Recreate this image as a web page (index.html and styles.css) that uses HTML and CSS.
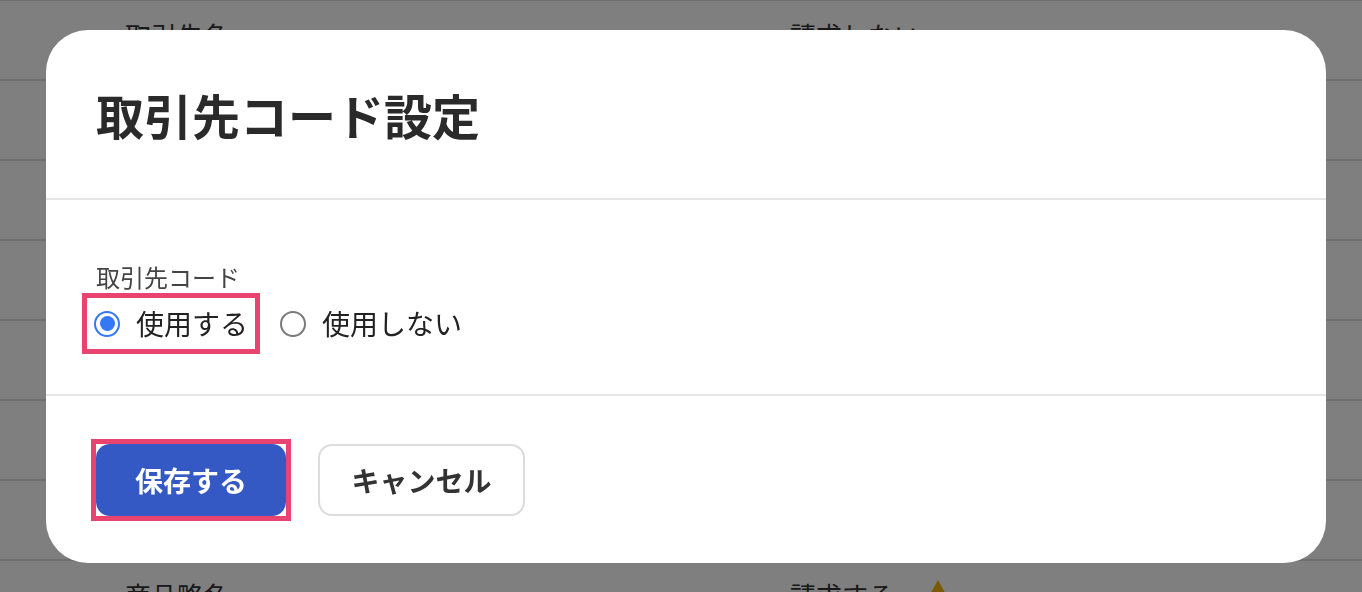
FILE: index.html
```html
<!DOCTYPE html>
<html lang="ja">
<head>
<meta charset="utf-8">
<title>取引先コード設定</title>
<link rel="stylesheet" href="styles.css">
</head>
<body>
<div class="page">
  <div class="list">
    <div class="row"><span class="cell-left">取引先名</span><span class="cell-right">請求しない</span></div>
    <div class="row"><span class="cell-left">取引先コード</span><span class="cell-right">使用する</span></div>
    <div class="row"><span class="cell-left">住所</span><span class="cell-right">表示する</span></div>
    <div class="row"><span class="cell-left">電話番号</span><span class="cell-right">表示する</span></div>
    <div class="row"><span class="cell-left">担当者</span><span class="cell-right">表示する</span></div>
    <div class="row"><span class="cell-left">支払条件</span><span class="cell-right">月末締め</span></div>
    <div class="row"><span class="cell-left">備考</span><span class="cell-right">表示しない</span></div>
    <div class="row"><span class="cell-left">商品略名</span><span class="cell-right">請求する<svg class="warn" width="22" height="20" viewBox="0 0 22 20"><path d="M11 0 L22 20 L0 20 Z" fill="#f4b400"/></svg></span></div>
  </div>
</div>

<div class="overlay">
  <div class="dialog">
    <div class="dialog-header">
      <h2 class="dialog-title">取引先コード設定</h2>
    </div>
    <div class="dialog-body">
      <div class="field-label">取引先コード</div>
      <div class="radio-group">
        <label class="radio-option highlighted">
          <span class="radio checked"></span>
          <span class="radio-text">使用する</span>
        </label>
        <label class="radio-option">
          <span class="radio"></span>
          <span class="radio-text">使用しない</span>
        </label>
      </div>
    </div>
    <div class="dialog-footer">
      <div class="btn-wrap highlighted">
        <button class="btn btn-primary">保存する</button>
      </div>
      <button class="btn btn-secondary">キャンセル</button>
    </div>
  </div>
</div>
</body>
</html>
```

FILE: styles.css
```css
* { box-sizing: border-box; }

html, body {
  margin: 0;
  padding: 0;
  width: 1362px;
  height: 592px;
  overflow: hidden;
  font-family: "Noto Sans CJK JP", "Noto Sans", sans-serif;
  background: #ffffff;
}

.page {
  width: 1362px;
  height: 592px;
  overflow: hidden;
}

.list {
  border-top: 2px solid #dcdcdc;
  margin-top: -1px;
}

.row {
  height: 80px;
  border-bottom: 2px solid #dcdcdc;
  display: flex;
  align-items: flex-start;
  padding-top: 16px;
  font-size: 26px;
  line-height: 36px;
  color: #333333;
  white-space: nowrap;
}

.cell-left {
  width: 790px;
  padding-left: 125px;
}

.cell-right {
  display: flex;
  align-items: flex-start;
}

.warn {
  margin-left: 33px;
  margin-top: 3px;
}

.overlay {
  position: fixed;
  inset: 0;
  background: rgba(0, 0, 0, 0.5);
  padding-top: 30px;
  padding-left: 46px;
}

.dialog {
  width: 1280px;
  height: 533px;
  background: #ffffff;
  border-radius: 42px;
  overflow: hidden;
}

.dialog-header {
  padding: 49px 50px;
  border-bottom: 2px solid #e6e6e6;
}

.dialog-title {
  margin: 0;
  font-size: 48px;
  line-height: 70px;
  font-weight: 700;
  color: #2a2a2a;
}

.dialog-body {
  padding: 60px 50px 45px;
  border-bottom: 2px solid #e6e6e6;
}

.field-label {
  font-size: 24px;
  line-height: 34px;
  color: #444444;
}

.radio-group {
  display: flex;
  gap: 18px;
  margin-top: 4px;
  margin-left: -9px;
}

.radio-option {
  display: flex;
  align-items: center;
  gap: 16px;
  padding: 6px 7px 6px 7px;
  font-size: 28px;
  line-height: 39px;
  color: #222222;
  white-space: nowrap;
}

.highlighted {
  outline: 5px solid #e8446f;
}

.radio {
  width: 26px;
  height: 26px;
  border-radius: 50%;
  border: 2px solid #7a7a7a;
  display: flex;
  align-items: center;
  justify-content: center;
  flex: none;
}

.radio.checked {
  border-color: #3478f6;
}

.radio.checked::after {
  content: "";
  width: 15px;
  height: 15px;
  border-radius: 50%;
  background: #3478f6;
}

.dialog-footer {
  padding: 48px 50px 0;
  display: flex;
  align-items: flex-start;
  gap: 32px;
}

.btn-wrap {
  display: flex;
}

.btn {
  height: 72px;
  border-radius: 14px;
  font-family: "Noto Sans CJK JP", "Noto Sans", sans-serif;
  font-size: 28px;
  font-weight: 700;
  padding: 0;
  white-space: nowrap;
  cursor: pointer;
}

.btn-primary {
  width: 190px;
  background: #3559c4;
  border: none;
  color: #ffffff;
}

.btn-secondary {
  width: 207px;
  background: #ffffff;
  border: 2px solid #dcdcdc;
  color: #333333;
}
```
